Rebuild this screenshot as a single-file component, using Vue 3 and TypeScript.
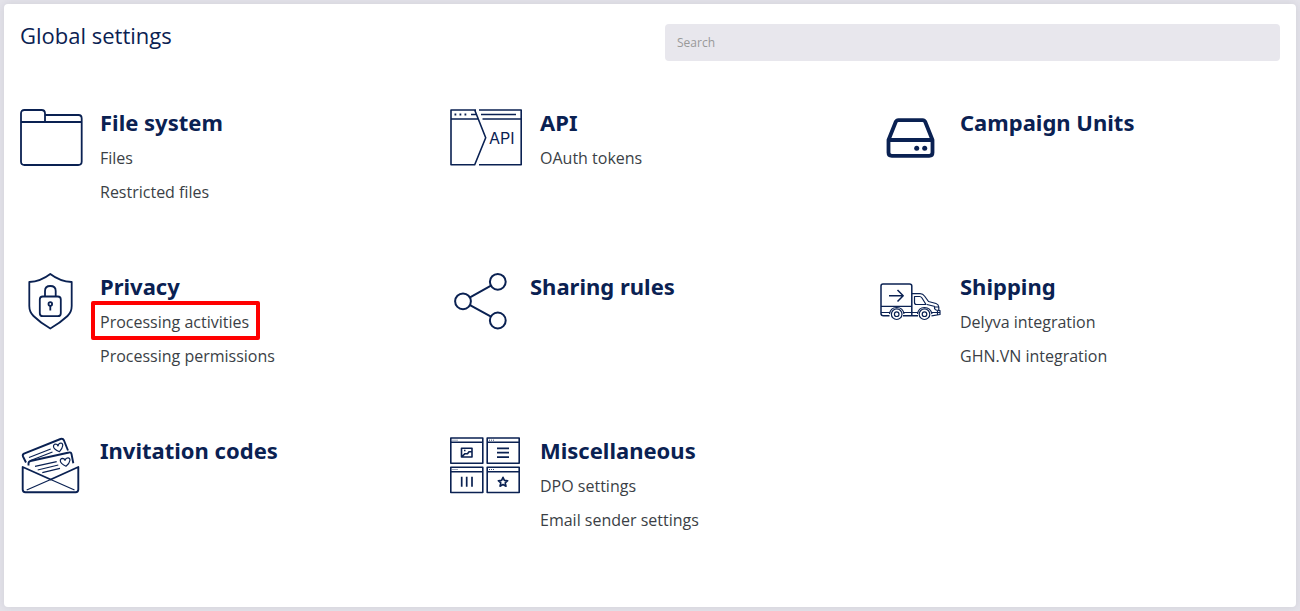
<script setup lang="ts">
import { ref } from 'vue'

interface SettingsLink {
  label: string
  highlighted?: boolean
}

interface SettingsGroup {
  icon: string
  title: string
  iconClass?: string
  links: SettingsLink[]
}

const query = ref('')

const groups: SettingsGroup[] = [
  { icon: 'folder', title: 'File system', links: [{ label: 'Files' }, { label: 'Restricted files' }] },
  { icon: 'api', title: 'API', iconClass: 'icon-wide', links: [{ label: 'OAuth tokens' }] },
  { icon: 'drive', title: 'Campaign Units', links: [] },
  {
    icon: 'shield',
    title: 'Privacy',
    links: [{ label: 'Processing activities', highlighted: true }, { label: 'Processing permissions' }],
  },
  { icon: 'share', title: 'Sharing rules', links: [] },
  { icon: 'truck', title: 'Shipping', links: [{ label: 'Delyva integration' }, { label: 'GHN.VN integration' }] },
  { icon: 'invite', title: 'Invitation codes', links: [] },
  {
    icon: 'windows',
    title: 'Miscellaneous',
    iconClass: 'icon-wide',
    links: [{ label: 'DPO settings' }, { label: 'Email sender settings' }],
  },
]
</script>

<template>
  <main class="card">
    <header class="header">
      <h1 class="title">Global settings</h1>
      <input v-model="query" class="search" type="search" placeholder="Search" aria-label="Search" />
    </header>

    <div class="grid">
      <section v-for="group in groups" :key="group.title" class="group">
        <svg class="icon" :class="group.iconClass" aria-hidden="true">
          <g v-if="group.icon === 'folder'" stroke-width="1.8">
            <path d="M1 14V5.500Q1 2 4.500 2H21.500Q25 2 25 5.500V14M25 7H58.500Q61.700 7 61.700 10.500V53.500Q61.700 57 58.200 57H4.500Q1 57 1 53.500V14H61.700" />
          </g>
          <g v-else-if="group.icon === 'api'" stroke-width="1.6">
            <path d="M26 2H1V56.700H24.700L35.700 29.700L24.700 2M1 11H28M21 6.500H26.500M29 2H71.200V56.700H29M31 6.500H66M32.500 11H71" />
            <path d="M4.500 6.500h1.800M9.500 6.500h1.800M14.500 6.500h1.800" stroke-width="1.800" />
            <text class="icon-text" x="39" y="36">API</text>
          </g>
          <g v-else-if="group.icon === 'drive'" stroke-width="3.8">
            <path d="M8.500 32L15.500 14.500Q16.300 12.200 18.500 12.200H42.500Q44.700 12.200 45.500 14.500L52.500 32V44.500Q52.500 47.800 49.200 47.800H11.800Q8.500 47.800 8.500 44.500ZV32H52.500" />
            <circle class="solid" cx="36.700" cy="40.200" r="2.500" />
            <circle class="solid" cx="44.700" cy="40.200" r="2.500" />
          </g>
          <g v-else-if="group.icon === 'shield'" stroke-width="1.8">
            <path d="M30.300 2Q40 9.500 51.700 10V34Q51.700 40 47.500 44Q40 51 30.300 56.500Q20.600 51 13.500 44Q9.300 40 9.300 34V10Q20.600 9.500 30.300 2Z" />
            <rect x="19.800" y="24.500" width="21" height="19.700" rx="3" />
            <path d="M25 24.500V19Q25 14 30.300 14Q35.700 14 35.700 19V24.500M30.300 34V38.500" />
            <circle cx="30.300" cy="32" r="1.800" />
          </g>
          <g v-else-if="group.icon === 'share'" stroke-width="2">
            <circle cx="13" cy="29.300" r="7.900" />
            <circle cx="47.800" cy="9.800" r="7.900" />
            <circle cx="47.800" cy="48.500" r="7.900" />
            <path d="M20 25.400L41 13.700M20 33.200L41 44.700" />
          </g>
          <g v-else-if="group.icon === 'truck'" stroke-width="1.2">
            <path d="M9.500 43.800H3.500Q1 43.800 1 41.500V14Q1 12 3 12H29.500Q31.800 12 31.800 14V43.800H23M31.800 43.800H38M9 23.700H23M17.500 18L23.200 23.700L17.500 29.500" stroke-width="1.500" />
            <path d="M1 34.300H31.800M1 40.500H10M23 40.500H38M31.800 21.700H40Q43 21.700 44.500 24L48.500 29.500L56 31.500Q58.500 32.200 58.800 35V38.500H60V42.500L51.500 43.800M34.500 24.500H39.500Q41 24.500 42 26L46 32.500H36.500Q34.500 32.500 34.500 30.500ZM47 32.500L55 34.500M58.800 35H54.500Q54 38.500 58.800 38.500M52 40.500H60M57.500 38.500V43" />
            <path d="M9.500 42Q10.500 35.500 16.700 35.500Q23 35.500 24 42M37.500 42Q38.500 35.500 44.500 35.500Q50.500 35.500 52 42" />
            <circle cx="16.700" cy="42.200" r="5.300" />
            <circle cx="16.700" cy="42.200" r="2.300" />
            <circle cx="44.500" cy="42.200" r="5.300" />
            <circle cx="44.500" cy="42.200" r="2.300" />
          </g>
          <g v-else-if="group.icon === 'invite'" stroke-width="1.2">
            <path d="M2.700 31V53.500Q2.700 56.200 5.400 56.200H55.600Q58.300 56.200 58.300 53.500V31L30.700 43.500Z" stroke-width="1.900" />
            <path d="M30.700 43.500L6.700 54M30.700 43.500L54.500 54" />
            <path d="M6 26.500L3 20.500Q2.200 18.700 4 17.700L40.500 3Q43 2.200 44 4.500L48 14.500M8.500 29.500V27.500Q8.500 25.500 10.500 25L49 16.500Q51 16 51.500 18L53.300 27.300" stroke-width="1.900" />
            <path d="M9 21.500L30.700 13M10.500 24.500L32.500 16M15 30.300L36.700 25.700M17.700 34L38.300 29M22.300 36.700L40 32.300" />
            <path d="M39.500 15.700Q33.500 13.300 33.500 10.500Q33.500 8.200 35.500 8Q37.500 8 38 10Q38.500 7 40.800 7Q43 7.200 42.700 9.800Q42.400 12.500 39.500 15.700ZM46 30.200Q40.300 27.500 40.300 24.700Q40.300 22.500 42.400 22.300Q44.500 22.300 45 24.300Q45.800 21.700 48 21.800Q50.200 22 49.900 24.500Q49.500 27.500 46 30.200Z" />
          </g>
          <g v-else stroke-width="1.6">
            <path d="M.800 2H32.800V27.300H.800ZM.800 6.300H32.800M37.200 2H69.200V27.300H37.200ZM37.200 6.300H69.200M.800 31.300H32.800V56.500H.800ZM.800 35.700H32.800M37.200 31.300H69.200V56.500H37.200ZM37.200 35.700H69.200" />
            <path d="M2.500 4.200H8M39 4.200H44.500M2.500 33.500H8M39 33.500H44.500" stroke-width=".8" stroke-dasharray="1 1" />
            <path d="M47 12.300H59M47 16.700H59M47 21.200H59M11.700 40.800V50.800M16.700 40.800V50.800M22 40.800V50.800" stroke-width="1.700" />
            <path d="M11.500 12.300H22V21H11.500ZM12 20.500L15 17.700H17.500L19 15.700H22M14 14.500H15.500M53 41.300L54.400 44.400L57.700 44.700L55.200 46.900L56 50.200L53 48.500L50 50.200L50.800 46.900L48.300 44.700L51.600 44.400Z" stroke-width="1.600" />
          </g>
        </svg>

        <div class="body">
          <h2 class="group-title">{{ group.title }}</h2>
          <ul v-if="group.links.length" class="links">
            <li v-for="link in group.links" :key="link.label">
              <a href="#" class="link" :class="{ highlighted: link.highlighted }">{{ link.label }}</a>
            </li>
          </ul>
        </div>
      </section>
    </div>
  </main>
</template>

<style>
body {
  background: #e4e3ea;
}
</style>

<style scoped>
.card {
  box-sizing: border-box;
  min-height: calc(100vh - 8px);
  margin: 4px;
  padding: 20px 0 16px;
  border-radius: 4px;
  background: #fff;
  box-shadow: 0 0 8px rgba(40, 40, 60, 0.1);
  font-family: "Open Sans", "Noto Sans", sans-serif;
  color: #0a2152;
}

.header {
  display: grid;
  grid-template-columns: 1fr 1fr;
  gap: 30px;
  padding: 0 16px;
}

.title {
  margin: 0;
  font-size: 22px;
  font-weight: 400;
  line-height: 22px;
}

.search {
  box-sizing: border-box;
  width: 100%;
  height: 37px;
  padding: 0 12px;
  border: 0;
  border-radius: 4px;
  background: #e8e7ed;
  font: 12px "Open Sans", "Noto Sans", sans-serif;
  color: #333;
  appearance: none;
}

.search::placeholder {
  color: #999;
  opacity: 1;
}

.grid {
  display: grid;
  grid-template-columns: repeat(3, 1fr);
  grid-auto-rows: minmax(120px, auto);
  row-gap: 44px;
  margin-top: 47px;
  padding-right: 2px;
}

.group {
  display: flex;
  gap: 20px;
  padding-left: 16px;
}

.icon {
  flex: none;
  width: 60px;
  height: 60px;
  overflow: visible;
  fill: none;
  stroke: currentColor;
  stroke-linecap: butt;
  stroke-linejoin: round;
}

.icon-wide {
  width: 70px;
}

.icon-text {
  fill: currentColor;
  stroke: none;
  font: 16px Inter, sans-serif;
}

.solid {
  fill: currentColor;
  stroke: none;
}

.group-title {
  margin: 0;
  font-family: "Noto Sans", "Open Sans", sans-serif;
  font-size: 22px;
  font-weight: 700;
  line-height: 28px;
}

.links {
  display: flex;
  flex-direction: column;
  gap: 10px;
  margin: 10px 0 0;
  padding: 0;
  list-style: none;
}

.links li {
  line-height: 24px;
}

.link {
  position: relative;
  display: inline-block;
  font-size: 16px;
  color: #3b3f46;
  text-decoration: none;
}

.highlighted::after {
  content: "";
  position: absolute;
  inset: -9px -11px -6px -9px;
  border: 4px solid #f00;
  border-radius: 2px;
}
</style>
